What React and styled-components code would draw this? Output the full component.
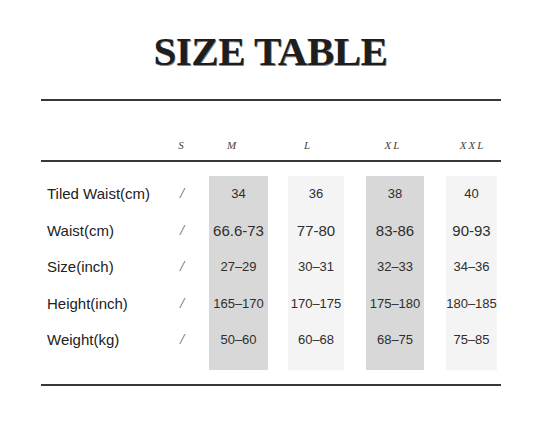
import React from 'react'
import styled, { createGlobalStyle } from 'styled-components'

const GlobalStyle = createGlobalStyle`
  html, body {
    margin: 0;
    padding: 0;
    background: #fff;
  }
  body {
    width: 540px;
    height: 442px;
    overflow: hidden;
    font-family: 'Liberation Sans', Arial, sans-serif;
  }
`

const Page = styled.div`
  width: 540px;
  height: 442px;
  padding-top: 30px;
  box-sizing: border-box;
`

const Title = styled.h1`
  margin: 0 0 27px;
  text-align: center;
  font-family: 'Liberation Serif', 'Times New Roman', serif;
  font-weight: 700;
  font-size: 41px;
  line-height: 42px;
  letter-spacing: -0.5px;
  color: #1e1e1e;
  text-shadow: 0.7px 0.7px 0 #888;
  padding-left: 1px;
`

const Sheet = styled.div`
  width: 460px;
  margin-left: 41px;
`

const Rule = styled.div`
  height: ${(p) => p.$weight || 2}px;
  background: #222;
  opacity: 0.9;
`

const HeadRow = styled.div`
  display: flex;
  align-items: flex-end;
  height: 59px;
  padding-bottom: 8px;
  box-sizing: border-box;
`

const HeadCell = styled.div`
  width: ${(p) => p.$w}px;
  text-align: center;
  font-family: 'Liberation Serif', 'Times New Roman', serif;
  font-style: italic;
  font-size: 11px;
  line-height: 13px;
  letter-spacing: 2px;
  color: #444;
  transform: translateX(${(p) => p.$nudge || 0}px);
`

const Body = styled.div`
  display: flex;
  margin: 14px 0 14px;
`

const Column = styled.div`
  width: ${(p) => p.$w}px;
  display: flex;
  flex-direction: column;
  padding-bottom: 12px;
  background: ${(p) => p.$shade || 'transparent'};
`

const Cell = styled.div`
  height: 36.5px;
  display: flex;
  align-items: center;
  justify-content: ${(p) => (p.$left ? 'flex-start' : 'center')};
  padding-left: ${(p) => (p.$left ? '6px' : '0')};
  font-size: ${(p) => p.$size || 13}px;
  color: ${(p) => (p.$left ? '#222' : '#2e2e2e')};
  white-space: nowrap;
`

const Slash = styled(Cell)`
  font-family: 'Liberation Serif', 'Times New Roman', serif;
  font-style: italic;
  font-size: 15px;
  color: #555;
`

const Gap = styled.div`
  width: ${(p) => p.$w}px;
`

const labels = [
  'Tiled Waist(cm)',
  'Waist(cm)',
  'Size(inch)',
  'Height(inch)',
  'Weight(kg)',
]

const rowSizes = [13, 15, 13, 13, 13]

const sizes = [
  {
    name: 'M',
    w: 59,
    gap: 20,
    nudge: -6,
    shade: '#d8d8d8',
    values: ['34', '66.6-73', '27–29', '165–170', '50–60'],
  },
  {
    name: 'L',
    w: 56,
    gap: 22,
    nudge: -8,
    shade: '#f4f4f4',
    values: ['36', '77-80', '30–31', '170–175', '60–68'],
  },
  {
    name: 'XL',
    w: 58,
    gap: 22,
    nudge: -2,
    shade: '#d8d8d8',
    values: ['38', '83-86', '32–33', '175–180', '68–75'],
  },
  {
    name: 'XXL',
    w: 51,
    gap: 0,
    nudge: 1,
    shade: '#f4f4f4',
    values: ['40', '90-93', '34–36', '180–185', '75–85'],
  },
]

function App() {
  return (
    <Page>
      <GlobalStyle />
      <Title>SIZE TABLE</Title>
      <Sheet>
        <Rule $weight={2} />
        <HeadRow>
          <HeadCell $w={124} />
          <HeadCell $w={34}>S</HeadCell>
          <Gap $w={10} />
          {sizes.map((s) => (
            <React.Fragment key={s.name}>
              <HeadCell $w={s.w} $nudge={s.nudge}>
                {s.name}
              </HeadCell>
              {s.gap > 0 && <Gap $w={s.gap} />}
            </React.Fragment>
          ))}
        </HeadRow>
        <Rule $weight={1.5} />
        <Body>
          <Column $w={124}>
            {labels.map((l) => (
              <Cell key={l} $left $size={15}>
                {l}
              </Cell>
            ))}
          </Column>
          <Column $w={34}>
            {labels.map((l) => (
              <Slash key={l}>/</Slash>
            ))}
          </Column>
          <Gap $w={10} />
          {sizes.map((s) => (
            <React.Fragment key={s.name}>
              <Column $w={s.w} $shade={s.shade}>
                {s.values.map((v, i) => (
                  <Cell key={i} $size={rowSizes[i]}>
                    {v}
                  </Cell>
                ))}
              </Column>
              {s.gap > 0 && <Gap $w={s.gap} />}
            </React.Fragment>
          ))}
        </Body>
        <Rule $weight={2} />
      </Sheet>
    </Page>
  )
}

export default App
